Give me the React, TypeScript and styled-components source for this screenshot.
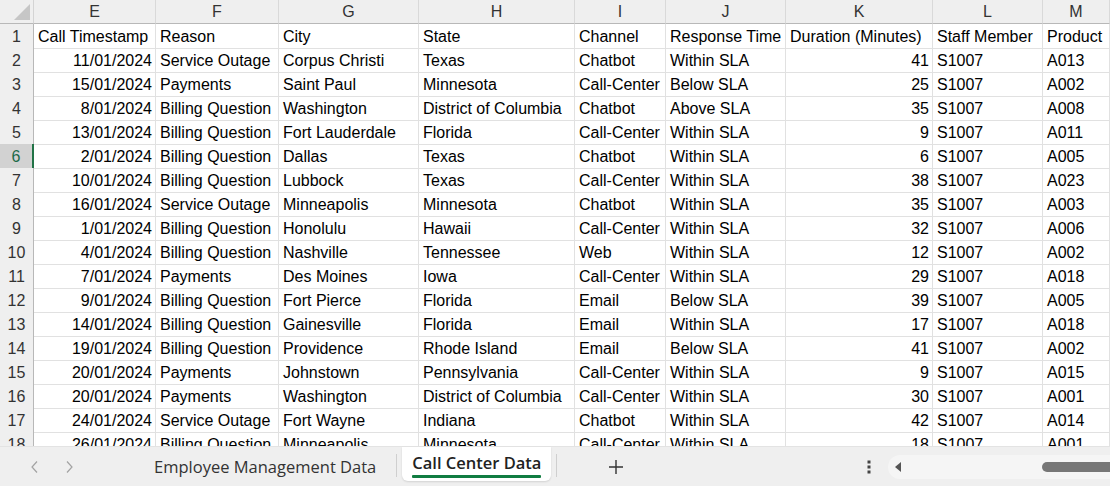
import React from 'react';
import styled, { createGlobalStyle } from 'styled-components';

const GlobalStyle = createGlobalStyle`
  html, body {
    margin: 0;
    padding: 0;
    background: #fff;
  }
  body {
    font-family: "Liberation Sans", Arial, sans-serif;
  }
`;

const COLS = '34px 122px 123px 140px 156px 91px 120px 147px 110px 1fr';

const Screen = styled.div`
  display: flex;
  flex-direction: column;
  width: 1110px;
  height: 486px;
  overflow: hidden;
`;

const Sheet = styled.div`
  flex: 1;
  overflow: hidden;
  background: #fff;
`;

const Row = styled.div`
  display: grid;
  grid-template-columns: ${COLS};
  height: 24px;
`;

const Corner = styled.div`
  position: relative;
  background: #efefef;
  border-right: 1px solid #d4d4d4;
  border-bottom: 1px solid #b8b8b8;
  &::after {
    content: '';
    position: absolute;
    right: 3px;
    bottom: 3px;
    border-style: solid;
    border-width: 0 0 16px 16px;
    border-color: transparent transparent #c6c6c6 transparent;
  }
`;

const ColHead = styled.div`
  background: #efefef;
  border-right: 1px solid #d9d9d9;
  border-bottom: 1px solid #b8b8b8;
  color: #333;
  font-size: 16px;
  line-height: 23px;
  text-align: center;
`;

const RowHead = styled.div<{ $active?: boolean }>`
  background: ${(p) => (p.$active ? '#d2d2d2' : '#efefef')};
  color: ${(p) => (p.$active ? '#1c6b4a' : '#333')};
  border-right: ${(p) => (p.$active ? '2px solid #217346' : '1px solid #b8b8b8')};
  border-bottom: 1px solid #d9d9d9;
  font-size: 16px;
  line-height: 23px;
  padding-top: 1px;
  text-align: center;
`;

const Cell = styled.div<{ $num?: boolean }>`
  border-right: 1px solid #e1e1e1;
  border-bottom: 1px solid #e1e1e1;
  color: #000;
  font-size: 16px;
  line-height: 23px;
  padding: 1px ${(p) => (p.$num ? '3px' : '4px')} 0;
  text-align: ${(p) => (p.$num ? 'right' : 'left')};
  white-space: nowrap;
  overflow: hidden;
`;

const TabBar = styled.div`
  display: flex;
  align-items: stretch;
  height: 40px;
  background: #efefef;
  border-top: 1px solid #e3e3e3;
  box-sizing: border-box;
`;

const NavArrows = styled.div`
  display: flex;
  align-items: center;
  gap: 24px;
  padding-left: 30px;
  width: 124px;
  box-sizing: border-box;
`;

const Tab = styled.div<{ $active?: boolean }>`
  position: relative;
  display: flex;
  align-items: center;
  padding: 0 ${(p) => (p.$active ? '10px' : '15px')} 0 ${(p) => (p.$active ? '10px' : '30px')};
  padding-bottom: ${(p) => (p.$active ? '4px' : '0')};
  margin-bottom: ${(p) => (p.$active ? '5px' : '0')};
  background: ${(p) => (p.$active ? '#fff' : 'transparent')};
  border-radius: ${(p) => (p.$active ? '0 0 6px 6px' : '0')};
  box-shadow: ${(p) => (p.$active ? '0 1px 2px rgba(0,0,0,0.12)' : 'none')};
  color: ${(p) => (p.$active ? '#222' : '#333')};
  font-family: "Open Sans", "Liberation Sans", sans-serif;
  font-size: 16.5px;
  font-weight: ${(p) => (p.$active ? 600 : 400)};
`;

const Underline = styled.span`
  position: absolute;
  left: 10px;
  right: 10px;
  bottom: 3px;
  height: 3px;
  border-radius: 1px;
  background: #107c41;
`;

const Divider = styled.div`
  width: 1px;
  margin: 7px 5px 9px;
  background: #cfcfcf;
`;

const AddButton = styled.div`
  display: flex;
  align-items: center;
  justify-content: center;
  width: 40px;
  margin-left: 34px;
  color: #333;
`;

const Spacer = styled.div`
  flex: 1;
`;

const MoreDots = styled.div`
  display: flex;
  align-items: center;
  width: 21px;
`;

const HScroll = styled.div`
  display: flex;
  align-items: center;
  width: 222px;
  margin: 8px 0 7px 0;
  background: #f5f5f5;
  border-radius: 12px 0 0 12px;
  padding-left: 6px;
  box-sizing: border-box;
`;

const Thumb = styled.div`
  margin-left: auto;
  width: 68px;
  height: 10px;
  background: #777;
  border-radius: 5px 0 0 5px;
`;

const headers = ['E', 'F', 'G', 'H', 'I', 'J', 'K', 'L', 'M'];

type Rec = [string, string, string, string, string, string, string, string, string];

const data: Rec[] = [
  ['Call Timestamp', 'Reason', 'City', 'State', 'Channel', 'Response Time', 'Duration (Minutes)', 'Staff Member', 'Product'],
  ['11/01/2024', 'Service Outage', 'Corpus Christi', 'Texas', 'Chatbot', 'Within SLA', '41', 'S1007', 'A013'],
  ['15/01/2024', 'Payments', 'Saint Paul', 'Minnesota', 'Call-Center', 'Below SLA', '25', 'S1007', 'A002'],
  ['8/01/2024', 'Billing Question', 'Washington', 'District of Columbia', 'Chatbot', 'Above SLA', '35', 'S1007', 'A008'],
  ['13/01/2024', 'Billing Question', 'Fort Lauderdale', 'Florida', 'Call-Center', 'Within SLA', '9', 'S1007', 'A011'],
  ['2/01/2024', 'Billing Question', 'Dallas', 'Texas', 'Chatbot', 'Within SLA', '6', 'S1007', 'A005'],
  ['10/01/2024', 'Billing Question', 'Lubbock', 'Texas', 'Call-Center', 'Within SLA', '38', 'S1007', 'A023'],
  ['16/01/2024', 'Service Outage', 'Minneapolis', 'Minnesota', 'Chatbot', 'Within SLA', '35', 'S1007', 'A003'],
  ['1/01/2024', 'Billing Question', 'Honolulu', 'Hawaii', 'Call-Center', 'Within SLA', '32', 'S1007', 'A006'],
  ['4/01/2024', 'Billing Question', 'Nashville', 'Tennessee', 'Web', 'Within SLA', '12', 'S1007', 'A002'],
  ['7/01/2024', 'Payments', 'Des Moines', 'Iowa', 'Call-Center', 'Within SLA', '29', 'S1007', 'A018'],
  ['9/01/2024', 'Billing Question', 'Fort Pierce', 'Florida', 'Email', 'Below SLA', '39', 'S1007', 'A005'],
  ['14/01/2024', 'Billing Question', 'Gainesville', 'Florida', 'Email', 'Within SLA', '17', 'S1007', 'A018'],
  ['19/01/2024', 'Billing Question', 'Providence', 'Rhode Island', 'Email', 'Below SLA', '41', 'S1007', 'A002'],
  ['20/01/2024', 'Payments', 'Johnstown', 'Pennsylvania', 'Call-Center', 'Within SLA', '9', 'S1007', 'A015'],
  ['20/01/2024', 'Payments', 'Washington', 'District of Columbia', 'Call-Center', 'Within SLA', '30', 'S1007', 'A001'],
  ['24/01/2024', 'Service Outage', 'Fort Wayne', 'Indiana', 'Chatbot', 'Within SLA', '42', 'S1007', 'A014'],
  ['26/01/2024', 'Billing Question', 'Minneapolis', 'Minnesota', 'Call-Center', 'Within SLA', '18', 'S1007', 'A001'],
];

// date and duration columns are right aligned (below the header row)
const isNum = (row: number, col: number) => row > 0 && (col === 0 || col === 6);

const Chevron = ({ dir }: { dir: 'left' | 'right' }) => (
  <svg width="10" height="14" viewBox="0 0 10 14">
    <path
      d={dir === 'left' ? 'M7 1.5 L2 7 L7 12.5' : 'M3 1.5 L8 7 L3 12.5'}
      fill="none"
      stroke="#a3a3a3"
      strokeWidth="1.2"
    />
  </svg>
);

export default function App() {
  return (
    <Screen>
      <GlobalStyle />
      <Sheet>
        <Row>
          <Corner />
          {headers.map((h) => (
            <ColHead key={h}>{h}</ColHead>
          ))}
        </Row>
        {data.map((rec, r) => (
          <Row key={r}>
            <RowHead $active={r === 5}>{r + 1}</RowHead>
            {rec.map((v, c) => (
              <Cell key={c} $num={isNum(r, c)}>
                {v}
              </Cell>
            ))}
          </Row>
        ))}
      </Sheet>
      <TabBar>
        <NavArrows>
          <Chevron dir="left" />
          <Chevron dir="right" />
        </NavArrows>
        <Tab>Employee Management Data</Tab>
        <Divider />
        <Tab $active>
          Call Center Data
          <Underline />
        </Tab>
        <Divider />
        <AddButton>
          <svg width="16" height="16" viewBox="0 0 16 16">
            <path d="M8 1 V15 M1 8 H15" stroke="#333" strokeWidth="1.4" />
          </svg>
        </AddButton>
        <Spacer />
        <MoreDots>
          <svg width="4" height="14" viewBox="0 0 4 14">
            <rect x="0.5" y="0.5" width="3" height="3" fill="#444" />
            <rect x="0.5" y="5.5" width="3" height="3" fill="#444" />
            <rect x="0.5" y="10.5" width="3" height="3" fill="#444" />
          </svg>
        </MoreDots>
        <HScroll>
          <svg width="8" height="12" viewBox="0 0 8 12">
            <path d="M7 1 L1 6 L7 11 Z" fill="#555" />
          </svg>
          <Thumb />
        </HScroll>
      </TabBar>
    </Screen>
  );
}
